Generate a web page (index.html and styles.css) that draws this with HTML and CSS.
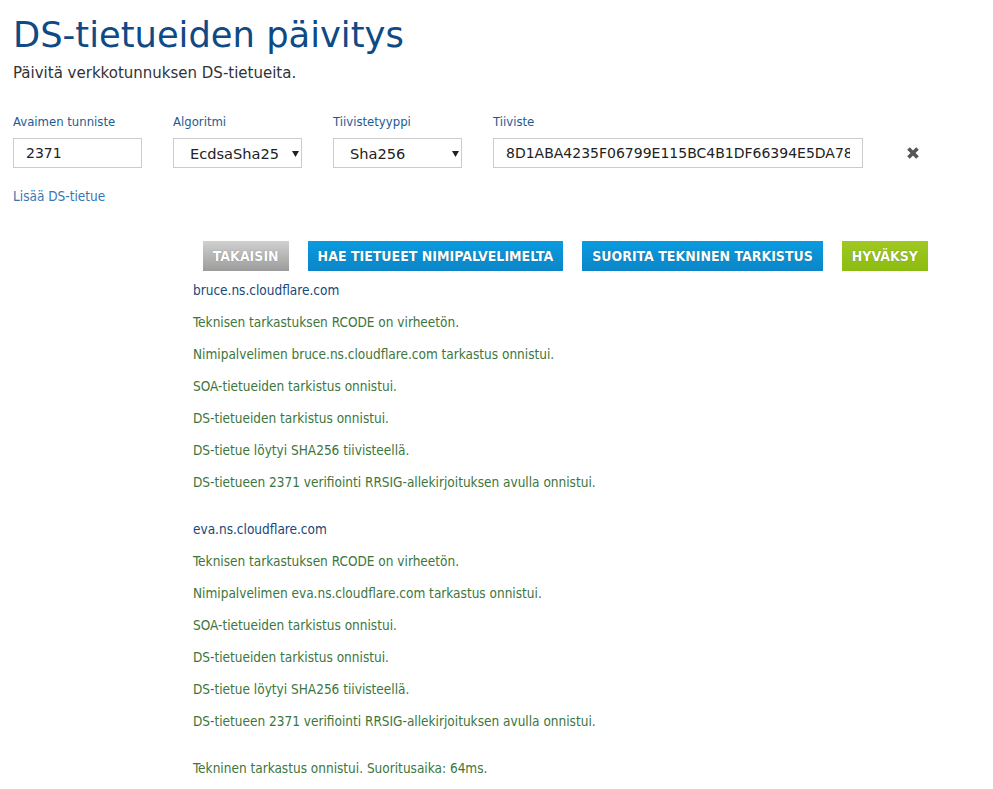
FILE: index.html
```html
<!DOCTYPE html>
<html lang="fi">
<head>
<meta charset="utf-8">
<title>DS-tietueiden päivitys</title>
<link rel="stylesheet" href="styles.css">
</head>
<body>
<div class="page">
  <h1 class="title">DS-tietueiden päivitys</h1>
  <p class="subtitle">Päivitä verkkotunnuksen DS-tietueita.</p>

  <div class="ds-row">
    <div class="field">
      <label class="label">Avaimen tunniste</label>
      <div class="input">2371</div>
    </div>
    <div class="field">
      <label class="label">Algoritmi</label>
      <div class="input select"><span class="select-text">EcdsaSha256</span><svg class="arrow" width="7" height="7" viewBox="0 0 7 7"><path d="M0 1 H7 L3.5 7 Z" fill="#222"/></svg></div>
    </div>
    <div class="field">
      <label class="label">Tiivistetyyppi</label>
      <div class="input select"><span class="select-text">Sha256</span><svg class="arrow" width="7" height="7" viewBox="0 0 7 7"><path d="M0 1 H7 L3.5 7 Z" fill="#222"/></svg></div>
    </div>
    <div class="field field-wide">
      <label class="label">Tiiviste</label>
      <div class="input"><span class="clip">8D1ABA4235F06799E115BC4B1DF66394E5DA78A1</span></div>
    </div>
    <div class="remove">
      <svg width="14" height="14" viewBox="0 0 14 14"><path d="M2.5 2.5 L11.5 11.5 M11.5 2.5 L2.5 11.5" stroke="#555" stroke-width="3.6" stroke-linecap="butt"/></svg>
    </div>
  </div>

  <a class="add-link" href="#">Lisää DS-tietue</a>

  <div class="actions">
    <button class="btn btn-grey">TAKAISIN</button>
    <button class="btn btn-blue">HAE TIETUEET NIMIPALVELIMELTA</button>
    <button class="btn btn-blue">SUORITA TEKNINEN TARKISTUS</button>
    <button class="btn btn-green">HYVÄKSY</button>
  </div>

  <div class="results">
    <div class="server">
      <div class="host">bruce.ns.cloudflare.com</div>
      <div class="ok">Teknisen tarkastuksen RCODE on virheetön.</div>
      <div class="ok">Nimipalvelimen bruce.ns.cloudflare.com tarkastus onnistui.</div>
      <div class="ok">SOA-tietueiden tarkistus onnistui.</div>
      <div class="ok">DS-tietueiden tarkistus onnistui.</div>
      <div class="ok">DS-tietue löytyi SHA256 tiivisteellä.</div>
      <div class="ok">DS-tietueen 2371 verifiointi RRSIG-allekirjoituksen avulla onnistui.</div>
    </div>
    <div class="server">
      <div class="host">eva.ns.cloudflare.com</div>
      <div class="ok">Teknisen tarkastuksen RCODE on virheetön.</div>
      <div class="ok">Nimipalvelimen eva.ns.cloudflare.com tarkastus onnistui.</div>
      <div class="ok">SOA-tietueiden tarkistus onnistui.</div>
      <div class="ok">DS-tietueiden tarkistus onnistui.</div>
      <div class="ok">DS-tietue löytyi SHA256 tiivisteellä.</div>
      <div class="ok">DS-tietueen 2371 verifiointi RRSIG-allekirjoituksen avulla onnistui.</div>
    </div>
    <div class="ok summary">Tekninen tarkastus onnistui. Suoritusaika: 64ms.</div>
  </div>
</div>
</body>
</html>
```

FILE: styles.css
```css
html, body {
  margin: 0;
  padding: 0;
  background: #fff;
}
body {
  font-family: "DejaVu Sans Condensed", "DejaVu Sans", Verdana, sans-serif;
  color: #333;
}
.page {
  padding: 13px 13px 0 13px;
}
.title {
  margin: 0;
  font-family: "DejaVu Sans", Verdana, sans-serif;
  font-weight: normal;
  font-size: 35.3px;
  line-height: 44px;
  color: #0e4a86;
}
.subtitle {
  margin: 6px 0 0 0;
  font-family: "DejaVu Sans", Verdana, sans-serif;
  font-size: 15px;
  line-height: 20px;
  color: #333;
}
.ds-row {
  display: flex;
  align-items: flex-end;
  gap: 31px;
  margin-top: 31px;
}
.field {
  display: flex;
  flex-direction: column;
  width: 129px;
}
.field-wide {
  width: 370px;
}
.label {
  font-size: 13px;
  line-height: 16px;
  color: #1d5b93;
  margin-bottom: 8px;
}
.input {
  box-sizing: border-box;
  height: 30px;
  border: 1px solid #ccc;
  padding: 0 12px;
  display: flex;
  align-items: center;
  font-family: "DejaVu Sans", Verdana, sans-serif;
  font-size: 14px;
  color: #222;
  overflow: hidden;
  white-space: nowrap;
}
.clip {
  overflow: hidden;
}
.select {
  padding: 0 0 0 16px;
  font-size: 14.6px;
}
.select-text {
  width: 88px;
  flex: none;
  overflow: hidden;
  white-space: nowrap;
}
.arrow {
  flex: none;
  margin-left: 14px;
}
.remove {
  display: flex;
  align-items: center;
  height: 30px;
  margin-left: 12px;
}
.add-link {
  display: inline-block;
  margin-top: 20px;
  font-size: 13.5px;
  color: #3876b3;
  text-decoration: none;
}
.actions {
  display: flex;
  justify-content: flex-end;
  gap: 19px;
  margin-top: 36px;
  padding-right: 52px;
}
.btn {
  height: 30px;
  border: none;
  padding: 0 10px;
  font-family: "DejaVu Sans Condensed", "DejaVu Sans", sans-serif;
  font-weight: bold;
  font-size: 14px;
  color: #fff;
  text-shadow: 0 0 1px rgba(0,0,0,0.4);
  cursor: pointer;
}
.btn-grey {
  background: linear-gradient(#d0d0d0, #9c9c9c);
}
.btn-blue {
  background: linear-gradient(#0a9be0, #0b86c8);
}
.btn-green {
  background: linear-gradient(#a0c922, #8cbb12);
}
.results {
  padding-left: 180px;
  margin-top: 11px;
  display: flex;
  flex-direction: column;
  gap: 31px;
}
.server {
  display: flex;
  flex-direction: column;
  gap: 16px;
}
.host {
  font-size: 13.5px;
  line-height: 16px;
  color: #17487a;
}
.ok {
  font-size: 13.5px;
  line-height: 16px;
  color: #3c763d;
}
```
